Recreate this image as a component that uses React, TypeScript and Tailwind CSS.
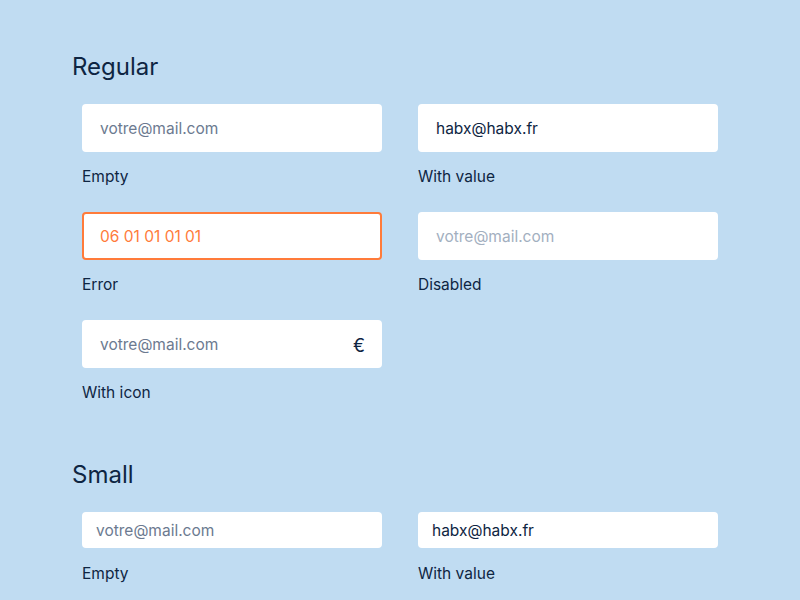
const FONT = "font-['Inter','Open_Sans',sans-serif]";

type FieldProps = {
  label: string;
  value?: string;
  placeholder?: string;
  state?: "normal" | "error" | "disabled";
  icon?: boolean;
  size?: "regular" | "small";
};

function Field({ label, value, placeholder = "votre@mail.com", state = "normal", icon, size = "regular" }: FieldProps) {
  const h = size === "small" ? "h-[36px] px-[12px]" : "h-[48px] pl-[16px] pr-[15px]";
  const border =
    state === "error" ? "border-2 border-[#ff7b3a]" : "border-2 border-white";
  let textColor = "text-[#0e2542]";
  if (state === "error") textColor = "text-[#ff7b3a]";
  else if (!value) textColor = state === "disabled" ? "text-[#a3afbf]" : "text-[#6c7a90]";

  return (
    <div className="flex flex-col">
      <div className={`flex items-center justify-between rounded-[4px] bg-white pt-[2px] ${h} ${border}`}>
        <span className={`text-[15.5px] ${textColor}`}>{value ?? placeholder}</span>
        {icon && <span className="text-[18px] text-[#0e2542]">€</span>}
      </div>
      <span className={`text-[15.5px] leading-6 text-[#0e2542] ${size === "small" ? "mt-[14px]" : "mt-[13px]"}`}>
        {label}
      </span>
    </div>
  );
}

export default function App() {
  return (
    <div className={`min-h-[600px] w-[800px] overflow-hidden bg-[#c0dcf2] pl-[72px] pt-[51px] ${FONT}`}>
      <h2 className="text-[24px] leading-8 text-[#0e2542]">Regular</h2>
      <div className="ml-[10px] mt-[21px] grid w-[636px] grid-cols-[300px_300px] gap-x-[36px] gap-y-[23px]">
        <Field label="Empty" />
        <Field label="With value" value="habx@habx.fr" />
        <Field label="Error" value="06 01 01 01 01" state="error" />
        <Field label="Disabled" state="disabled" />
        <Field label="With icon" icon />
      </div>
      <h2 className="mt-[54px] text-[24px] leading-8 text-[#0e2542]">Small</h2>
      <div className="ml-[10px] mt-[21px] grid w-[636px] grid-cols-[300px_300px] gap-x-[36px] gap-y-6">
        <Field label="Empty" size="small" />
        <Field label="With value" value="habx@habx.fr" size="small" />
      </div>
    </div>
  );
}
